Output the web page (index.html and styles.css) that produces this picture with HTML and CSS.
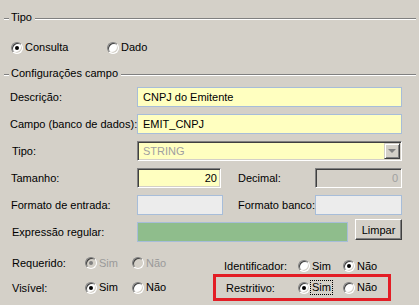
FILE: index.html
```html
<!DOCTYPE html>
<html lang="pt-BR">
<head>
  <meta charset="UTF-8">
  <title>Configurações campo</title>
  <link rel="stylesheet" href="styles.css">
</head>
<body>
  <div class="page">
    <!-- Tipo -->
    <div class="group-title"><span>Tipo</span></div>
    <div class="type-row">
      <div class="opt wide"><span class="radio on"></span><span class="txt">Consulta</span></div>
      <div class="opt"><span class="radio"></span><span class="txt">Dado</span></div>
    </div>

    <!-- Configurações campo -->
    <div class="group-title second"><span>Configurações campo</span></div>
    <div class="form">
      <div class="row">
        <span class="lbl">Descrição:</span>
        <div class="box text-field">CNPJ do Emitente</div>
      </div>
      <div class="row">
        <span class="lbl">Campo (banco de dados):</span>
        <div class="box text-field">EMIT_CNPJ</div>
      </div>
      <div class="row">
        <span class="lbl ind">Tipo:</span>
        <div class="box sunken combo">
          <span class="combo-text">STRING</span>
          <span class="dd-btn"><span class="arrow"></span></span>
        </div>
      </div>
      <div class="row">
        <span class="lbl ind1">Tamanho:</span>
        <div class="box sunken num">20</div>
        <span class="lbl2">Decimal:</span>
        <div class="box sunken num disabled">0</div>
      </div>
      <div class="row">
        <span class="lbl ind1">Formato de entrada:</span>
        <div class="box plain small"></div>
        <span class="lbl2 near">Formato banco:</span>
        <div class="box plain grow"></div>
      </div>
      <div class="row">
        <span class="lbl ind">Expressão regular:</span>
        <div class="box regex"></div>
        <button class="btn">Limpar</button>
      </div>
    </div>

    <div class="flags">
      <div class="flag-row">
        <div class="flag-left">
          <span class="lbl3">Requerido:</span>
          <div class="opt dis"><span class="radio on"></span><span class="txt">Sim</span></div>
          <div class="opt dis"><span class="radio"></span><span class="txt">Não</span></div>
        </div>
        <div class="flag-right">
          <span class="lbl4">Identificador:</span>
          <div class="opt"><span class="radio"></span><span class="txt">Sim</span></div>
          <div class="opt"><span class="radio on"></span><span class="txt">Não</span></div>
        </div>
      </div>
      <div class="flag-row tall">
        <div class="flag-left">
          <span class="lbl3">Visível:</span>
          <div class="opt"><span class="radio on"></span><span class="txt">Sim</span></div>
          <div class="opt"><span class="radio"></span><span class="txt">Não</span></div>
        </div>
        <div class="flag-right mark">
          <span class="lbl4">Restritivo:</span>
          <div class="opt"><span class="radio on"></span><span class="txt focus">Sim</span></div>
          <div class="opt"><span class="radio"></span><span class="txt">Não</span></div>
        </div>
      </div>
    </div>
  </div>
</body>
</html>
```

FILE: styles.css
```css
body {
  margin: 0;
  background-color: #d4d0c8;
  font-family: "Liberation Sans", Arial, sans-serif;
  font-size: 11px;
  color: #000;
  white-space: nowrap;
}

.page {
  width: 419px;
  height: 305px;
  box-sizing: border-box;
  padding: 11px 3px 0 4px;
  overflow: hidden;
}

/* group box caption with etched line */
.group-title {
  display: flex;
  align-items: flex-start;
  height: 13px;
  line-height: 13px;
}

.group-title::before,
.group-title::after {
  content: '';
  height: 0;
  margin-top: 7px;
  border-top: 1px solid #808080;
  border-bottom: 1px solid #fff;
}

.group-title::before {
  width: 5px;
}

.group-title::after {
  flex: 1;
}

.group-title span {
  padding: 0 3px 0 2px;
}

.group-title.second {
  margin-top: 13px;
}

.type-row {
  display: flex;
  align-items: center;
  height: 13px;
  margin-top: 17px;
  padding-left: 7px;
}

/* radio buttons */
.opt {
  display: flex;
  align-items: center;
}

.opt.wide {
  width: 96px;
}

.radio {
  position: relative;
  flex: none;
  width: 12px;
  height: 12px;
  box-sizing: border-box;
  border: 1px solid;
  border-color: #808080 #fff #fff #808080;
  border-radius: 50%;
  background: #fff;
  box-shadow: inset 1px 1px 0 #404040, inset -1px -1px 0 #d4d0c8;
}

.radio.on::after {
  content: '';
  position: absolute;
  left: 3px;
  top: 3px;
  width: 4px;
  height: 4px;
  border-radius: 50%;
  background: #000;
}

.txt {
  padding: 0 1px;
  border: 1px solid transparent;
  line-height: 13px;
}

.txt.focus {
  border: 1px dotted #000;
}

.opt.dis .radio {
  background: #d4d0c8;
}

.opt.dis .radio.on::after {
  background: #808080;
}

.opt.dis .txt {
  color: #9a9a9a;
}

/* form rows */
.form {
  display: flex;
  flex-direction: column;
  gap: 7px;
  margin-top: 7px;
  padding: 0 14px 0 6px;
}

.row {
  display: flex;
  align-items: center;
  height: 20px;
}

.lbl {
  flex: none;
  width: 127px;
}

.lbl.ind {
  padding-left: 2px;
  width: 125px;
}

.lbl.ind1 {
  padding-left: 1px;
  width: 126px;
}

.lbl2 {
  flex: none;
  width: 77px;
  margin-left: 17px;
}

.lbl2.near {
  margin-left: 15px;
}

.box {
  height: 20px;
  box-sizing: border-box;
  display: flex;
  align-items: center;
}

.text-field {
  flex: 1;
  border: 1px solid #a7bdd9;
  background: #ffffc0;
  padding-left: 5px;
}

.sunken {
  border: 1px solid;
  border-color: #808080 #fff #fff #808080;
  box-shadow: inset 1px 1px 0 #404040, inset -1px -1px 0 #d4d0c8;
}

.combo {
  flex: 1;
  background: #ffffc0;
  color: #a0a0a0;
  padding-left: 5px;
}

.combo-text {
  flex: 1;
}

.dd-btn {
  width: 16px;
  height: 16px;
  margin-right: 1px;
  box-sizing: border-box;
  background: #d4d0c8;
  border: 1px solid;
  border-color: #d4d0c8 #404040 #404040 #d4d0c8;
  box-shadow: inset 1px 1px 0 #fff, inset -1px -1px 0 #808080;
  display: flex;
  align-items: center;
  justify-content: center;
}

.arrow {
  width: 0;
  height: 0;
  border-left: 4px solid transparent;
  border-right: 4px solid transparent;
  border-top: 4px solid #808080;
}

.num {
  width: 84px;
  background: #ffffc0;
  justify-content: flex-end;
  padding-right: 3px;
}

.num.disabled {
  flex: 1;
  width: auto;
  background: #d4d0c8;
  color: #a0a0a0;
}

.plain {
  border: 1px solid #a7bdd9;
  background: #ececec;
}

.plain.small {
  width: 86px;
}

.plain.grow {
  flex: 1;
}

.regex {
  flex: 1;
  border: 1px solid #a7bdd9;
  background: #8fbd8c;
  margin-right: 7px;
}

.btn {
  align-self: flex-start;
  margin-top: -3px;
  width: 47px;
  height: 21px;
  padding: 0;
  font: inherit;
  color: #000;
  background: #d4d0c8;
  border: 1px solid;
  border-color: #fff #404040 #404040 #fff;
  box-shadow: inset -1px -1px 0 #808080;
}

/* bottom radio groups */
.flags {
  margin-top: 11px;
  padding-left: 6px;
}

.flag-row {
  display: flex;
  align-items: flex-start;
  height: 20px;
}

.flag-row.tall {
  height: 27px;
  margin-top: 1px;
}

.flag-left {
  display: flex;
  align-items: center;
  width: 203px;
  height: 20px;
}

.flag-row.tall .flag-left {
  height: 27px;
}

.lbl3 {
  width: 75px;
  padding-left: 2px;
  box-sizing: border-box;
}

.flag-left .opt {
  width: 47px;
}

.flag-right {
  display: flex;
  align-items: center;
  width: 178px;
  height: 26px;
  box-sizing: border-box;
  border: 3px solid transparent;
}

.flag-right.mark {
  height: 27px;
  border-color: #e31d25;
}

.lbl4 {
  width: 82px;
  padding-left: 8px;
  box-sizing: border-box;
}

.mark .lbl4 {
  padding-left: 10px;
}

.flag-right .opt {
  width: 45px;
}
```
